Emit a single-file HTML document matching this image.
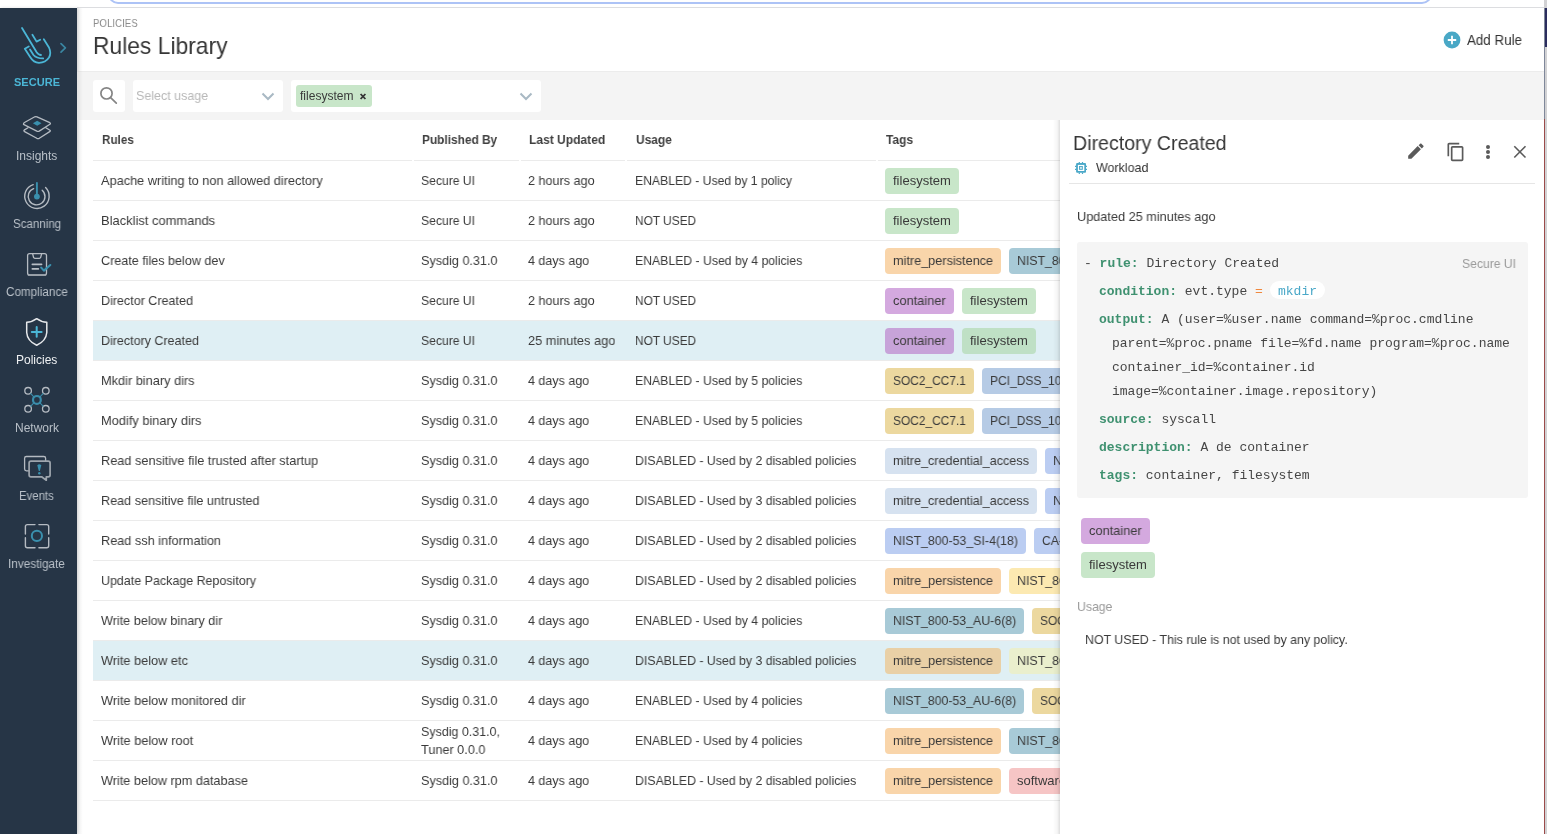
<!DOCTYPE html>
<html><head><meta charset="utf-8"><style>
html,body{margin:0;padding:0;width:1547px;height:834px;overflow:hidden;background:#fff;position:relative}
.t{position:absolute;white-space:nowrap;font-family:"Liberation Sans",sans-serif;will-change:transform;transform-origin:0 0}
.tag{position:absolute;border-radius:4px}
.box{position:absolute;background:#fff;border-radius:3px}
.m{position:absolute;will-change:transform;white-space:nowrap;font-family:"Liberation Mono",monospace;font-size:13px;line-height:13px;color:#464646}
.k{color:#3f9170;font-weight:bold}
</style></head><body>
<div style="position:absolute;left:108px;top:-22px;width:1320px;height:22px;border:2px solid #adc3f6;border-radius:10px"></div>
<div style="position:absolute;left:77px;top:7px;width:1467px;height:1px;background:#dcdde0"></div>
<div style="position:absolute;left:0;top:8px;width:77px;height:826px;background:#263546;box-shadow:1px 0 3px rgba(0,0,0,0.12)"></div>
<svg style="position:absolute;left:0;top:0" width="77" height="834" viewBox="0 0 77 834" fill="none" stroke-linecap="round" stroke-linejoin="round">
<g stroke="#4bb6d6" stroke-width="1.8">
<path d="M22 28 L36.5 52 Q38.5 55 41 55"/>
<path d="M32.4 34.7 L36.6 41.6 L40.2 39.8"/>
<path d="M43.8 39.2 L49 47.5 Q51.5 53 49 57.5 Q45.5 62.8 39 62.8 Q33.5 62.5 30.5 57.5 L24.8 48.8 L28.8 46.5"/>
<path d="M30 49.4 L33.5 55 Q36.5 58.5 43.2 58.4"/>
</g>
<path d="M61 43.7 L65.4 47.9 L61 52.1" stroke="#3a86a1" stroke-width="1.7"/>
<g stroke="#b5bbc2" stroke-width="1.3">
<path d="M23.5 124.3 Q23.3 123.2 24.5 122.5 L34.8 116.8 Q35.8 116.3 37 116.8 L49.8 122.7 Q51 123.4 49.9 124.2 L39.2 131.1 Q38.1 131.7 36.8 131.2 Z"/>
<path d="M28 127.7 L24.5 129.9 Q23.2 130.8 24.6 131.6 L36.8 138.3 Q38.1 138.9 39.3 138.3 L49.7 131.6 Q51 130.8 49.6 130 L45.8 127.7"/>
</g>
<path d="M37.2 120.8 L41.5 123.3 L37.2 125.8 L32.9 123.3 Z" fill="#3a90ae"/>
<g stroke="#b5bbc2" stroke-width="1.4">
<path d="M33.2 184.6 A12.2 12.2 0 1 0 45.6 187.6"/>
<path d="M33.6 188.6 A8.4 8.4 0 1 0 42.2 190.2"/>
</g>
<path d="M36.9 183 L36.9 196" stroke="#3a90ae" stroke-width="1.9"/>
<circle cx="36.9" cy="196.6" r="2.9" fill="#3a90ae"/>
<g stroke="#b5bbc2" stroke-width="1.3">
<path d="M29.6 253.6 Q27.6 253.6 27.6 255.6 L27.6 273 Q27.6 275 29.6 275 L44.5 275 Q46.5 275 46.5 273 L46.5 255.6 Q46.5 253.6 44.5 253.6 Z"/>
<path d="M32.6 253.6 L33.6 257.6 Q33.9 258.3 34.8 258.3 L39.4 258.3 Q40.3 258.3 40.6 257.6 L41.7 253.6"/>
</g>
<path d="M28.5 275.2 L45.5 275.2" stroke="#9aa1a9" stroke-width="1.6"/>
<path d="M32.3 264.4 L41.6 264.4 M32.3 268.9 L38.4 268.9" stroke="#b8bec5" stroke-width="1.6"/>
<path d="M41.2 267.6 L43.9 270.6 L50.3 265" stroke="#3a90ae" stroke-width="2.1"/>
<path d="M36.7 318.7 Q32 322.2 26.7 322.3 L26.7 332.5 Q27.3 341 36.7 345.3 Q46.1 341 46.8 332.5 L46.8 322.3 Q41.4 322.2 36.7 318.7 Z" stroke="#e6e8eb" stroke-width="1.5"/>
<path d="M36.7 327 L36.7 336.8 M31.8 331.9 L41.6 331.9" stroke="#4bb6d6" stroke-width="2"/>
<g stroke="#b5bbc2" stroke-width="1.3">
<circle cx="28.1" cy="390.8" r="3.3"/><circle cx="45.8" cy="390.8" r="3.3"/>
<circle cx="28.1" cy="408.8" r="3.3"/><circle cx="45.8" cy="408.8" r="3.3"/>
</g>
<circle cx="36.9" cy="399.9" r="3.9" stroke="#3a8dab" stroke-width="2.2"/>
<path d="M30.8 393.6 L33.6 396.6 M43.1 393.6 L40.2 396.6 M30.8 406.1 L33.6 403.2 M43.1 406.1 L40.2 403.2" stroke="#3a8dab" stroke-width="1.1"/>
<path d="M29 470.8 L26.4 470.8 Q24.6 470.8 24.6 469 L24.6 458.3 Q24.6 456.5 26.4 456.5 L43.8 456.5 Q45.6 456.5 45.6 458.3 L45.6 461" stroke="#b4bac1" stroke-width="1.3"/>
<path d="M31 461.2 L48.2 461.2 Q50.1 461.2 50.1 463.1 L50.1 475 Q50.1 476.8 48.2 476.8 L46.3 476.8 L46.3 480.2 L41.6 476.8 L31 476.8 Q29.1 476.8 29.1 475 L29.1 463.1 Q29.1 461.2 31 461.2 Z" stroke="#9ea5ad" stroke-width="1.7"/>
<path d="M37.3 465.3 Q39.3 463.2 41.3 465.3 L39.8 471 L38.8 471 Z" fill="#3a90ae"/>
<circle cx="39.3" cy="473.2" r="1.2" fill="#3a90ae"/>
<g stroke="#b5bbc2" stroke-width="1.4">
<path d="M25.4 534 L25.4 526.6 Q25.4 524.6 27.4 524.6 L35 524.6 M38.9 524.6 L46.7 524.6 Q48.7 524.6 48.7 526.6 L48.7 534 M48.7 537.8 L48.7 545.7 Q48.7 547.7 46.7 547.7 L38.9 547.7 M35 547.7 L27.4 547.7 Q25.4 547.7 25.4 545.7 L25.4 537.8"/>
</g>
<circle cx="36.9" cy="535.9" r="5.1" stroke="#3a90ae" stroke-width="2"/>
</svg>
<div class="t" style="left:14.0px;top:77px;font-size:11px;line-height:11px;color:#4bb6d6;transform:scaleX(1.0034);font-weight:bold;text-align:left;">SECURE</div>
<div class="t" style="left:16.2px;top:150px;font-size:12px;line-height:12px;color:#b9c0c8;transform:scaleX(0.9964);">Insights</div>
<div class="t" style="left:12.7px;top:218px;font-size:12px;line-height:12px;color:#b9c0c8;transform:scaleX(0.9625);">Scanning</div>
<div class="t" style="left:5.9px;top:286px;font-size:12px;line-height:12px;color:#b9c0c8;transform:scaleX(0.9743);">Compliance</div>
<div class="t" style="left:16.4px;top:354px;font-size:12px;line-height:12px;color:#eef0f2;transform:scaleX(0.9885);">Policies</div>
<div class="t" style="left:14.9px;top:422px;font-size:12px;line-height:12px;color:#b9c0c8;transform:scaleX(0.9936);">Network</div>
<div class="t" style="left:19.4px;top:490px;font-size:12px;line-height:12px;color:#b9c0c8;transform:scaleX(0.9483);">Events</div>
<div class="t" style="left:8.3px;top:558px;font-size:12px;line-height:12px;color:#b9c0c8;transform:scaleX(0.9805);">Investigate</div>
<div class="t" style="left:92.6px;top:18px;font-size:11px;line-height:11px;color:#8c8c8c;transform:scaleX(0.8809);">POLICIES</div>
<div class="t" style="left:92.7px;top:34px;font-size:24px;line-height:24px;color:#363636;transform:scaleX(0.9513);">Rules Library</div>
<svg style="position:absolute;left:1443px;top:31px" width="18" height="18" viewBox="0 0 18 18"><circle cx="9" cy="9" r="8.4" fill="#49a8c6"/><path d="M9 4.8V13.2M4.8 9H13.2" stroke="#fff" stroke-width="1.8"/></svg>
<div class="t" style="left:1466.6px;top:33px;font-size:14px;line-height:14px;color:#333;transform:scaleX(0.9549);">Add Rule</div>
<div style="position:absolute;left:77px;top:71px;width:1467px;height:49px;background:#f4f4f4"></div>
<div style="position:absolute;left:77px;top:71px;width:1467px;height:1px;background:#ececec"></div>
<div class="box" style="left:93px;top:80px;width:32px;height:32px"></div>
<svg style="position:absolute;left:93px;top:80px" width="32" height="32" viewBox="0 0 32 32" fill="none" stroke="#858585" stroke-width="1.7" stroke-linecap="round"><circle cx="13.5" cy="13.4" r="5.6"/><path d="M17.6 17.7 L23.3 23.2"/></svg>
<div class="box" style="left:133px;top:80px;width:150px;height:32px"></div>
<div class="t" style="left:135.6px;top:89px;font-size:13px;line-height:13px;color:#b8b8b8;transform:scaleX(0.9593);">Select usage</div>
<svg style="position:absolute;left:258px;top:88px" width="20" height="16" viewBox="0 0 20 16" fill="none" stroke="#a9b9c4" stroke-width="2"><path d="M4.5 5.5 L10 11 L15.5 5.5"/></svg>
<div class="box" style="left:291px;top:80px;width:250px;height:32px"></div>
<div class="tag" style="left:296px;top:85px;width:76px;height:22px;background:#c8e6c9;border-radius:3px"></div>
<div class="t" style="left:300.3px;top:90px;font-size:12px;line-height:12px;color:#3a3a3a;transform:scaleX(1.0031);">filesystem</div>
<svg style="position:absolute;left:358px;top:92px" width="10" height="9" viewBox="0 0 10 9" fill="none" stroke="#333" stroke-width="1.8"><path d="M2.6 2.0 L7.4 7.0 M7.4 2.0 L2.6 7.0"/></svg>
<svg style="position:absolute;left:516px;top:88px" width="20" height="16" viewBox="0 0 20 16" fill="none" stroke="#a9b9c4" stroke-width="2"><path d="M4.5 5.5 L10 11 L15.5 5.5"/></svg>
<div style="position:absolute;left:77px;top:8px;width:6px;height:826px;background:linear-gradient(to right,rgba(0,0,0,0.07),rgba(0,0,0,0))"></div>
<div style="position:absolute;left:93px;top:160px;width:967px;height:1px;background:#ebebeb"></div>
<div class="t" style="left:102.3px;top:133px;font-size:13px;line-height:13px;color:#404040;transform:scaleX(0.8983);font-weight:bold;">Rules</div>
<div class="t" style="left:421.8px;top:133px;font-size:13px;line-height:13px;color:#404040;transform:scaleX(0.9132);font-weight:bold;">Published By</div>
<div class="t" style="left:529.3px;top:133px;font-size:13px;line-height:13px;color:#404040;transform:scaleX(0.9254);font-weight:bold;">Last Updated</div>
<div class="t" style="left:635.9px;top:133px;font-size:13px;line-height:13px;color:#404040;transform:scaleX(0.9200);font-weight:bold;">Usage</div>
<div class="t" style="left:886.0px;top:133px;font-size:13px;line-height:13px;color:#404040;transform:scaleX(0.9191);font-weight:bold;">Tags</div>
<div style="position:absolute;left:412px;top:160px;width:2px;height:1px;background:#fff"></div>
<div style="position:absolute;left:519px;top:160px;width:2px;height:1px;background:#fff"></div>
<div style="position:absolute;left:625px;top:160px;width:2px;height:1px;background:#fff"></div>
<div style="position:absolute;left:876px;top:160px;width:2px;height:1px;background:#fff"></div>
<div style="position:absolute;left:93px;top:200px;width:967px;height:1px;background:#ebebeb"></div>
<div class="t" style="left:101.2px;top:174px;font-size:13px;line-height:13px;color:#3a3a3a;transform:scaleX(0.9800);">Apache writing to non allowed directory</div>
<div class="t" style="left:420.9px;top:174px;font-size:13px;line-height:13px;color:#3a3a3a;transform:scaleX(0.9337);">Secure UI</div>
<div class="t" style="left:528.0px;top:174px;font-size:13px;line-height:13px;color:#3a3a3a;transform:scaleX(0.9697);">2 hours ago</div>
<div class="t" style="left:635.0px;top:174px;font-size:13px;line-height:13px;color:#3a3a3a;transform:scaleX(0.9370);">ENABLED - Used by 1 policy</div>
<div class="tag" style="left:885.0px;top:168px;width:74.0px;height:26px;background:#c8e6c9"></div>
<div class="t" style="left:893.0px;top:174px;font-size:13px;line-height:13px;color:#3a3a3a;transform:scaleX(1.0031);">filesystem</div>
<div style="position:absolute;left:93px;top:240px;width:967px;height:1px;background:#ebebeb"></div>
<div class="t" style="left:101.2px;top:214px;font-size:13px;line-height:13px;color:#3a3a3a;transform:scaleX(0.9937);">Blacklist commands</div>
<div class="t" style="left:420.9px;top:214px;font-size:13px;line-height:13px;color:#3a3a3a;transform:scaleX(0.9337);">Secure UI</div>
<div class="t" style="left:528.0px;top:214px;font-size:13px;line-height:13px;color:#3a3a3a;transform:scaleX(0.9697);">2 hours ago</div>
<div class="t" style="left:635.0px;top:214px;font-size:13px;line-height:13px;color:#3a3a3a;transform:scaleX(0.9124);">NOT USED</div>
<div class="tag" style="left:885.0px;top:208px;width:74.0px;height:26px;background:#c8e6c9"></div>
<div class="t" style="left:893.0px;top:214px;font-size:13px;line-height:13px;color:#3a3a3a;transform:scaleX(1.0031);">filesystem</div>
<div style="position:absolute;left:93px;top:280px;width:967px;height:1px;background:#ebebeb"></div>
<div class="t" style="left:101.2px;top:254px;font-size:13px;line-height:13px;color:#3a3a3a;transform:scaleX(0.9665);">Create files below dev</div>
<div class="t" style="left:420.9px;top:254px;font-size:13px;line-height:13px;color:#3a3a3a;transform:scaleX(0.9703);">Sysdig 0.31.0</div>
<div class="t" style="left:528.0px;top:254px;font-size:13px;line-height:13px;color:#3a3a3a;transform:scaleX(0.9620);">4 days ago</div>
<div class="t" style="left:635.0px;top:254px;font-size:13px;line-height:13px;color:#3a3a3a;transform:scaleX(0.9413);">ENABLED - Used by 4 policies</div>
<div class="tag" style="left:885.0px;top:248px;width:116.0px;height:26px;background:#f9d5aa"></div>
<div class="t" style="left:893.0px;top:254px;font-size:13px;line-height:13px;color:#3a3a3a;transform:scaleX(0.9751);">mitre_persistence</div>
<div class="tag" style="left:1009.0px;top:248px;width:139.2px;height:26px;background:#a8cad7"></div>
<div class="t" style="left:1017.0px;top:254px;font-size:13px;line-height:13px;color:#3a3a3a;transform:scaleX(0.9470);">NIST_800-53_AU-6(8)</div>
<div style="position:absolute;left:93px;top:320px;width:967px;height:1px;background:#ebebeb"></div>
<div class="t" style="left:101.2px;top:294px;font-size:13px;line-height:13px;color:#3a3a3a;transform:scaleX(0.9639);">Director Created</div>
<div class="t" style="left:420.9px;top:294px;font-size:13px;line-height:13px;color:#3a3a3a;transform:scaleX(0.9337);">Secure UI</div>
<div class="t" style="left:528.0px;top:294px;font-size:13px;line-height:13px;color:#3a3a3a;transform:scaleX(0.9697);">2 hours ago</div>
<div class="t" style="left:635.0px;top:294px;font-size:13px;line-height:13px;color:#3a3a3a;transform:scaleX(0.9124);">NOT USED</div>
<div class="tag" style="left:885.0px;top:288px;width:68.7px;height:26px;background:#d4a9df"></div>
<div class="t" style="left:893.0px;top:294px;font-size:13px;line-height:13px;color:#3a3a3a;transform:scaleX(0.9847);">container</div>
<div class="tag" style="left:961.7px;top:288px;width:74.0px;height:26px;background:#c8e6c9"></div>
<div class="t" style="left:969.7px;top:294px;font-size:13px;line-height:13px;color:#3a3a3a;transform:scaleX(1.0031);">filesystem</div>
<div style="position:absolute;left:93px;top:321px;width:967px;height:39px;background:#dfeff4"></div>
<div style="position:absolute;left:93px;top:360px;width:967px;height:1px;background:#ebebeb"></div>
<div class="t" style="left:101.2px;top:334px;font-size:13px;line-height:13px;color:#3a3a3a;transform:scaleX(0.9610);">Directory Created</div>
<div class="t" style="left:420.9px;top:334px;font-size:13px;line-height:13px;color:#3a3a3a;transform:scaleX(0.9337);">Secure UI</div>
<div class="t" style="left:528.0px;top:334px;font-size:13px;line-height:13px;color:#3a3a3a;transform:scaleX(0.9818);">25 minutes ago</div>
<div class="t" style="left:635.0px;top:334px;font-size:13px;line-height:13px;color:#3a3a3a;transform:scaleX(0.9124);">NOT USED</div>
<div class="tag" style="left:885.0px;top:328px;width:68.7px;height:26px;background:#c7a3d9"></div>
<div class="t" style="left:893.0px;top:334px;font-size:13px;line-height:13px;color:#3a3a3a;transform:scaleX(0.9847);">container</div>
<div class="tag" style="left:961.7px;top:328px;width:74.0px;height:26px;background:#bfe0c5"></div>
<div class="t" style="left:969.7px;top:334px;font-size:13px;line-height:13px;color:#3a3a3a;transform:scaleX(1.0031);">filesystem</div>
<div style="position:absolute;left:93px;top:400px;width:967px;height:1px;background:#ebebeb"></div>
<div class="t" style="left:101.2px;top:374px;font-size:13px;line-height:13px;color:#3a3a3a;transform:scaleX(0.9813);">Mkdir binary dirs</div>
<div class="t" style="left:420.9px;top:374px;font-size:13px;line-height:13px;color:#3a3a3a;transform:scaleX(0.9703);">Sysdig 0.31.0</div>
<div class="t" style="left:528.0px;top:374px;font-size:13px;line-height:13px;color:#3a3a3a;transform:scaleX(0.9620);">4 days ago</div>
<div class="t" style="left:635.0px;top:374px;font-size:13px;line-height:13px;color:#3a3a3a;transform:scaleX(0.9413);">ENABLED - Used by 5 policies</div>
<div class="tag" style="left:885.0px;top:368px;width:88.8px;height:26px;background:#ecd89f"></div>
<div class="t" style="left:893.0px;top:374px;font-size:13px;line-height:13px;color:#3a3a3a;transform:scaleX(0.9161);">SOC2_CC7.1</div>
<div class="tag" style="left:981.8px;top:368px;width:107.5px;height:26px;background:#b6cbe5"></div>
<div class="t" style="left:989.8px;top:374px;font-size:13px;line-height:13px;color:#3a3a3a;transform:scaleX(0.9241);">PCI_DSS_10.2.5</div>
<div style="position:absolute;left:93px;top:440px;width:967px;height:1px;background:#ebebeb"></div>
<div class="t" style="left:101.2px;top:414px;font-size:13px;line-height:13px;color:#3a3a3a;transform:scaleX(0.9860);">Modify binary dirs</div>
<div class="t" style="left:420.9px;top:414px;font-size:13px;line-height:13px;color:#3a3a3a;transform:scaleX(0.9703);">Sysdig 0.31.0</div>
<div class="t" style="left:528.0px;top:414px;font-size:13px;line-height:13px;color:#3a3a3a;transform:scaleX(0.9620);">4 days ago</div>
<div class="t" style="left:635.0px;top:414px;font-size:13px;line-height:13px;color:#3a3a3a;transform:scaleX(0.9413);">ENABLED - Used by 5 policies</div>
<div class="tag" style="left:885.0px;top:408px;width:88.8px;height:26px;background:#ecd89f"></div>
<div class="t" style="left:893.0px;top:414px;font-size:13px;line-height:13px;color:#3a3a3a;transform:scaleX(0.9161);">SOC2_CC7.1</div>
<div class="tag" style="left:981.8px;top:408px;width:107.5px;height:26px;background:#b6cbe5"></div>
<div class="t" style="left:989.8px;top:414px;font-size:13px;line-height:13px;color:#3a3a3a;transform:scaleX(0.9241);">PCI_DSS_10.2.5</div>
<div style="position:absolute;left:93px;top:480px;width:967px;height:1px;background:#ebebeb"></div>
<div class="t" style="left:101.2px;top:454px;font-size:13px;line-height:13px;color:#3a3a3a;transform:scaleX(0.9793);">Read sensitive file trusted after startup</div>
<div class="t" style="left:420.9px;top:454px;font-size:13px;line-height:13px;color:#3a3a3a;transform:scaleX(0.9703);">Sysdig 0.31.0</div>
<div class="t" style="left:528.0px;top:454px;font-size:13px;line-height:13px;color:#3a3a3a;transform:scaleX(0.9620);">4 days ago</div>
<div class="t" style="left:635.0px;top:454px;font-size:13px;line-height:13px;color:#3a3a3a;transform:scaleX(0.9474);">DISABLED - Used by 2 disabled policies</div>
<div class="tag" style="left:885.0px;top:448px;width:151.9px;height:26px;background:#d6e2f0"></div>
<div class="t" style="left:893.0px;top:454px;font-size:13px;line-height:13px;color:#3a3a3a;transform:scaleX(0.9692);">mitre_credential_access</div>
<div class="tag" style="left:1044.9px;top:448px;width:89.9px;height:26px;background:#bbcdf2"></div>
<div class="t" style="left:1052.9px;top:454px;font-size:13px;line-height:13px;color:#3a3a3a;transform:scaleX(0.9555);">NIST_800-53</div>
<div style="position:absolute;left:93px;top:520px;width:967px;height:1px;background:#ebebeb"></div>
<div class="t" style="left:101.2px;top:494px;font-size:13px;line-height:13px;color:#3a3a3a;transform:scaleX(0.9709);">Read sensitive file untrusted</div>
<div class="t" style="left:420.9px;top:494px;font-size:13px;line-height:13px;color:#3a3a3a;transform:scaleX(0.9703);">Sysdig 0.31.0</div>
<div class="t" style="left:528.0px;top:494px;font-size:13px;line-height:13px;color:#3a3a3a;transform:scaleX(0.9620);">4 days ago</div>
<div class="t" style="left:635.0px;top:494px;font-size:13px;line-height:13px;color:#3a3a3a;transform:scaleX(0.9474);">DISABLED - Used by 3 disabled policies</div>
<div class="tag" style="left:885.0px;top:488px;width:151.9px;height:26px;background:#d6e2f0"></div>
<div class="t" style="left:893.0px;top:494px;font-size:13px;line-height:13px;color:#3a3a3a;transform:scaleX(0.9692);">mitre_credential_access</div>
<div class="tag" style="left:1044.9px;top:488px;width:89.9px;height:26px;background:#bbcdf2"></div>
<div class="t" style="left:1052.9px;top:494px;font-size:13px;line-height:13px;color:#3a3a3a;transform:scaleX(0.9555);">NIST_800-53</div>
<div style="position:absolute;left:93px;top:560px;width:967px;height:1px;background:#ebebeb"></div>
<div class="t" style="left:101.2px;top:534px;font-size:13px;line-height:13px;color:#3a3a3a;transform:scaleX(0.9765);">Read ssh information</div>
<div class="t" style="left:420.9px;top:534px;font-size:13px;line-height:13px;color:#3a3a3a;transform:scaleX(0.9703);">Sysdig 0.31.0</div>
<div class="t" style="left:528.0px;top:534px;font-size:13px;line-height:13px;color:#3a3a3a;transform:scaleX(0.9620);">4 days ago</div>
<div class="t" style="left:635.0px;top:534px;font-size:13px;line-height:13px;color:#3a3a3a;transform:scaleX(0.9474);">DISABLED - Used by 2 disabled policies</div>
<div class="tag" style="left:885.0px;top:528px;width:140.9px;height:26px;background:#bbcdf2"></div>
<div class="t" style="left:893.0px;top:534px;font-size:13px;line-height:13px;color:#3a3a3a;transform:scaleX(0.9497);">NIST_800-53_SI-4(18)</div>
<div class="tag" style="left:1033.9px;top:528px;width:43.6px;height:26px;background:#bbcdf2"></div>
<div class="t" style="left:1041.9px;top:534px;font-size:13px;line-height:13px;color:#3a3a3a;transform:scaleX(0.9302);">CA-9</div>
<div style="position:absolute;left:93px;top:600px;width:967px;height:1px;background:#ebebeb"></div>
<div class="t" style="left:101.2px;top:574px;font-size:13px;line-height:13px;color:#3a3a3a;transform:scaleX(0.9584);">Update Package Repository</div>
<div class="t" style="left:420.9px;top:574px;font-size:13px;line-height:13px;color:#3a3a3a;transform:scaleX(0.9703);">Sysdig 0.31.0</div>
<div class="t" style="left:528.0px;top:574px;font-size:13px;line-height:13px;color:#3a3a3a;transform:scaleX(0.9620);">4 days ago</div>
<div class="t" style="left:635.0px;top:574px;font-size:13px;line-height:13px;color:#3a3a3a;transform:scaleX(0.9474);">DISABLED - Used by 2 disabled policies</div>
<div class="tag" style="left:885.0px;top:568px;width:116.0px;height:26px;background:#f9d5aa"></div>
<div class="t" style="left:893.0px;top:574px;font-size:13px;line-height:13px;color:#3a3a3a;transform:scaleX(0.9751);">mitre_persistence</div>
<div class="tag" style="left:1009.0px;top:568px;width:89.9px;height:26px;background:#fce9b1"></div>
<div class="t" style="left:1017.0px;top:574px;font-size:13px;line-height:13px;color:#3a3a3a;transform:scaleX(0.9555);">NIST_800-53</div>
<div style="position:absolute;left:93px;top:640px;width:967px;height:1px;background:#ebebeb"></div>
<div class="t" style="left:101.2px;top:614px;font-size:13px;line-height:13px;color:#3a3a3a;transform:scaleX(0.9721);">Write below binary dir</div>
<div class="t" style="left:420.9px;top:614px;font-size:13px;line-height:13px;color:#3a3a3a;transform:scaleX(0.9703);">Sysdig 0.31.0</div>
<div class="t" style="left:528.0px;top:614px;font-size:13px;line-height:13px;color:#3a3a3a;transform:scaleX(0.9620);">4 days ago</div>
<div class="t" style="left:635.0px;top:614px;font-size:13px;line-height:13px;color:#3a3a3a;transform:scaleX(0.9413);">ENABLED - Used by 4 policies</div>
<div class="tag" style="left:885.0px;top:608px;width:139.2px;height:26px;background:#a8cad7"></div>
<div class="t" style="left:893.0px;top:614px;font-size:13px;line-height:13px;color:#3a3a3a;transform:scaleX(0.9470);">NIST_800-53_AU-6(8)</div>
<div class="tag" style="left:1032.2px;top:608px;width:88.8px;height:26px;background:#ecd89f"></div>
<div class="t" style="left:1040.2px;top:614px;font-size:13px;line-height:13px;color:#3a3a3a;transform:scaleX(0.9161);">SOC2_CC7.1</div>
<div style="position:absolute;left:93px;top:641px;width:967px;height:39px;background:#dfeff4"></div>
<div style="position:absolute;left:93px;top:680px;width:967px;height:1px;background:#ebebeb"></div>
<div class="t" style="left:101.2px;top:654px;font-size:13px;line-height:13px;color:#3a3a3a;transform:scaleX(0.9800);">Write below etc</div>
<div class="t" style="left:420.9px;top:654px;font-size:13px;line-height:13px;color:#3a3a3a;transform:scaleX(0.9703);">Sysdig 0.31.0</div>
<div class="t" style="left:528.0px;top:654px;font-size:13px;line-height:13px;color:#3a3a3a;transform:scaleX(0.9620);">4 days ago</div>
<div class="t" style="left:635.0px;top:654px;font-size:13px;line-height:13px;color:#3a3a3a;transform:scaleX(0.9474);">DISABLED - Used by 3 disabled policies</div>
<div class="tag" style="left:885.0px;top:648px;width:116.0px;height:26px;background:#e9d0a6"></div>
<div class="t" style="left:893.0px;top:654px;font-size:13px;line-height:13px;color:#3a3a3a;transform:scaleX(0.9751);">mitre_persistence</div>
<div class="tag" style="left:1009.0px;top:648px;width:89.9px;height:26px;background:#eaefcd"></div>
<div class="t" style="left:1017.0px;top:654px;font-size:13px;line-height:13px;color:#3a3a3a;transform:scaleX(0.9555);">NIST_800-53</div>
<div style="position:absolute;left:93px;top:720px;width:967px;height:1px;background:#ebebeb"></div>
<div class="t" style="left:101.2px;top:694px;font-size:13px;line-height:13px;color:#3a3a3a;transform:scaleX(0.9832);">Write below monitored dir</div>
<div class="t" style="left:420.9px;top:694px;font-size:13px;line-height:13px;color:#3a3a3a;transform:scaleX(0.9703);">Sysdig 0.31.0</div>
<div class="t" style="left:528.0px;top:694px;font-size:13px;line-height:13px;color:#3a3a3a;transform:scaleX(0.9620);">4 days ago</div>
<div class="t" style="left:635.0px;top:694px;font-size:13px;line-height:13px;color:#3a3a3a;transform:scaleX(0.9413);">ENABLED - Used by 4 policies</div>
<div class="tag" style="left:885.0px;top:688px;width:139.2px;height:26px;background:#a8cad7"></div>
<div class="t" style="left:893.0px;top:694px;font-size:13px;line-height:13px;color:#3a3a3a;transform:scaleX(0.9470);">NIST_800-53_AU-6(8)</div>
<div class="tag" style="left:1032.2px;top:688px;width:88.8px;height:26px;background:#ecd89f"></div>
<div class="t" style="left:1040.2px;top:694px;font-size:13px;line-height:13px;color:#3a3a3a;transform:scaleX(0.9161);">SOC2_CC7.1</div>
<div style="position:absolute;left:93px;top:760px;width:967px;height:1px;background:#ebebeb"></div>
<div class="t" style="left:101.2px;top:734px;font-size:13px;line-height:13px;color:#3a3a3a;transform:scaleX(0.9847);">Write below root</div>
<div class="t" style="left:420.9px;top:725px;font-size:13px;line-height:13px;color:#3a3a3a;transform:scaleX(0.9579);">Sysdig 0.31.0,</div>
<div class="t" style="left:421.3px;top:743px;font-size:13px;line-height:13px;color:#3a3a3a;transform:scaleX(0.9759);">Tuner 0.0.0</div>
<div class="t" style="left:528.0px;top:734px;font-size:13px;line-height:13px;color:#3a3a3a;transform:scaleX(0.9620);">4 days ago</div>
<div class="t" style="left:635.0px;top:734px;font-size:13px;line-height:13px;color:#3a3a3a;transform:scaleX(0.9413);">ENABLED - Used by 4 policies</div>
<div class="tag" style="left:885.0px;top:728px;width:116.0px;height:26px;background:#f9d5aa"></div>
<div class="t" style="left:893.0px;top:734px;font-size:13px;line-height:13px;color:#3a3a3a;transform:scaleX(0.9751);">mitre_persistence</div>
<div class="tag" style="left:1009.0px;top:728px;width:89.9px;height:26px;background:#a8cad7"></div>
<div class="t" style="left:1017.0px;top:734px;font-size:13px;line-height:13px;color:#3a3a3a;transform:scaleX(0.9555);">NIST_800-53</div>
<div style="position:absolute;left:93px;top:800px;width:967px;height:1px;background:#ebebeb"></div>
<div class="t" style="left:101.2px;top:774px;font-size:13px;line-height:13px;color:#3a3a3a;transform:scaleX(0.9754);">Write below rpm database</div>
<div class="t" style="left:420.9px;top:774px;font-size:13px;line-height:13px;color:#3a3a3a;transform:scaleX(0.9703);">Sysdig 0.31.0</div>
<div class="t" style="left:528.0px;top:774px;font-size:13px;line-height:13px;color:#3a3a3a;transform:scaleX(0.9620);">4 days ago</div>
<div class="t" style="left:635.0px;top:774px;font-size:13px;line-height:13px;color:#3a3a3a;transform:scaleX(0.9474);">DISABLED - Used by 2 disabled policies</div>
<div class="tag" style="left:885.0px;top:768px;width:116.0px;height:26px;background:#f9d5aa"></div>
<div class="t" style="left:893.0px;top:774px;font-size:13px;line-height:13px;color:#3a3a3a;transform:scaleX(0.9751);">mitre_persistence</div>
<div class="tag" style="left:1009.0px;top:768px;width:104.6px;height:26px;background:#f6c5c5"></div>
<div class="t" style="left:1017.0px;top:774px;font-size:13px;line-height:13px;color:#3a3a3a;transform:scaleX(0.9969);">software_mgmt</div>
<div style="position:absolute;left:1060px;top:120px;width:484px;height:714px;background:#fff"></div>
<div style="position:absolute;left:1053px;top:120px;width:7px;height:714px;background:linear-gradient(to left,rgba(0,0,0,0.13),rgba(0,0,0,0.04) 40%,rgba(0,0,0,0))"></div>
<div class="t" style="left:1072.6px;top:133px;font-size:20px;line-height:20px;color:#363636;transform:scaleX(0.9801);">Directory Created</div>
<svg style="position:absolute;left:1074px;top:161px" width="14" height="14" viewBox="0 0 14 14" fill="none">
<rect x="2.1" y="2.1" width="9.9" height="9.6" rx="1" fill="#4aa8c8"/>
<rect x="3.9" y="3.9" width="6.4" height="6.1" fill="#fff"/>
<rect x="5" y="5" width="3.8" height="3.8" fill="#4aa8c8"/>
<rect x="5.9" y="5.9" width="2" height="2" fill="#cde6ef"/>
<path d="M5.3 1V2.5M8.5 1V2.5M5.3 11.5V13M8.5 11.5V13M1 5.3H2.5M1 8.3H2.5M11.5 5.3H13M11.5 8.3H13" stroke="#4aa8c8" stroke-width="1.2"/>
</svg>
<div class="t" style="left:1095.6px;top:161px;font-size:13px;line-height:13px;color:#333;transform:scaleX(0.9584);">Workload</div>
<div style="position:absolute;left:1069px;top:183px;width:466px;height:1px;background:#e6e6e6"></div>
<svg style="position:absolute;left:1395px;top:130px" width="145" height="45" viewBox="0 0 145 45" fill="none">
<g transform="translate(10.6,10.8) scale(0.86)"><path fill="#5a5a5a" d="M3 17.25V21h3.75L17.81 9.94l-3.75-3.75L3 17.25zM20.71 7.04c.39-.39.39-1.02 0-1.41l-2.34-2.34c-.39-.39-1.02-.39-1.41 0l-1.83 1.83 3.75 3.75 1.83-1.83z"/></g>
<g transform="translate(50.8,11.9) scale(0.84)"><path fill="#5a5a5a" d="M16 1H4c-1.1 0-2 .9-2 2v14h2V3h12V1zm3 4H8c-1.1 0-2 .9-2 2v14c0 1.1.9 2 2 2h11c1.1 0 2-.9 2-2V7c0-1.1-.9-2-2-2zm0 16H8V7h11v14z"/></g>
<circle cx="93" cy="17" r="2" fill="#5a5a5a"/><circle cx="93" cy="22" r="2" fill="#5a5a5a"/><circle cx="93" cy="27" r="2" fill="#5a5a5a"/>
<path d="M119.3 16.3 L130.5 27.5 M130.5 16.3 L119.3 27.5" stroke="#5a5a5a" stroke-width="1.6"/>
</svg>
<div class="t" style="left:1076.7px;top:210px;font-size:13px;line-height:13px;color:#3a3a3a;transform:scaleX(0.9777);">Updated 25 minutes ago</div>
<div style="position:absolute;left:1077px;top:242px;width:451px;height:256px;background:#f5f5f5;border-radius:3px"></div>
<div class="t" style="left:1461.5px;top:257px;font-size:13px;line-height:13px;color:#9a9a9a;transform:scaleX(0.9342);">Secure UI</div>
<div class="m" style="left:1084.3px;top:257px">- <b class="k">rule:</b> Directory Created</div>
<div class="m" style="left:1099.2px;top:285px"><b class="k">condition:</b> evt.type <span style="color:#f0883e">=</span> </div>
<div style="position:absolute;left:1270px;top:281px;width:55px;height:18px;background:#fff;border-radius:9px"></div>
<div class="m" style="left:1277.8px;top:285px"><span style="color:#4aa8c8">mkdir</span></div>
<div class="m" style="left:1099.2px;top:313px"><b class="k">output:</b> A (user=%user.name command=%proc.cmdline</div>
<div class="m" style="left:1111.8px;top:337px">parent=%proc.pname file=%fd.name program=%proc.name</div>
<div class="m" style="left:1111.8px;top:361px">container_id=%container.id</div>
<div class="m" style="left:1111.8px;top:385px">image=%container.image.repository)</div>
<div class="m" style="left:1099.2px;top:413px"><b class="k">source:</b> syscall</div>
<div class="m" style="left:1099.2px;top:441px"><b class="k">description:</b> A de container</div>
<div class="m" style="left:1099.2px;top:469px"><b class="k">tags:</b> container, filesystem</div>
<div class="tag" style="left:1081.0px;top:518px;width:68.7px;height:26px;background:#d4a9df"></div>
<div class="t" style="left:1089.0px;top:524px;font-size:13px;line-height:13px;color:#3a3a3a;transform:scaleX(0.9847);">container</div>
<div class="tag" style="left:1081.0px;top:552px;width:74.0px;height:26px;background:#c8e6c9"></div>
<div class="t" style="left:1089.0px;top:558px;font-size:13px;line-height:13px;color:#3a3a3a;transform:scaleX(1.0031);">filesystem</div>
<div class="t" style="left:1077.0px;top:600px;font-size:13px;line-height:13px;color:#9a9a9a;transform:scaleX(0.9437);">Usage</div>
<div class="t" style="left:1084.7px;top:633px;font-size:13px;line-height:13px;color:#3a3a3a;transform:scaleX(0.9518);">NOT USED - This rule is not used by any policy.</div>
<div style="position:absolute;left:1544px;top:0;width:3px;height:834px;background:#d2d2d4"></div>
<div style="position:absolute;left:1544px;top:8px;width:1px;height:826px;background:#7f8799"></div>
<div style="position:absolute;left:1544px;top:119px;width:1px;height:715px;background:#9b4a4a"></div>
<div style="position:absolute;left:1545px;top:8px;width:2px;height:39px;background:#2b2d5e"></div>
</body></html>
